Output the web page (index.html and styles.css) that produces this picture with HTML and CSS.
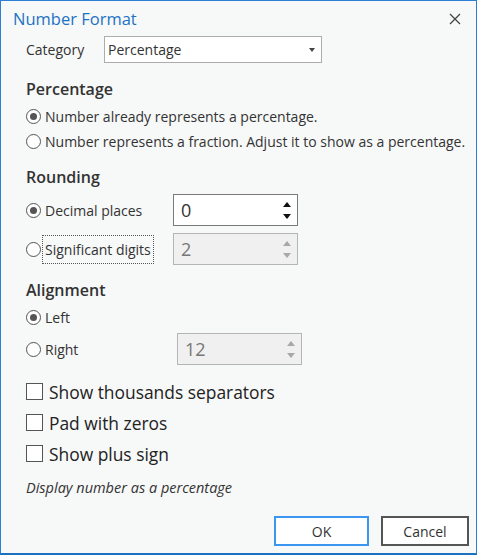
FILE: index.html
```html
<!DOCTYPE html>
<html lang="en">
<head>
  <meta charset="UTF-8">
  <title>Number Format</title>
  <link rel="stylesheet" href="styles.css">
</head>
<body>
  <div class="dialog">
    <header class="titlebar">
      <h1>Number Format</h1>
      <button class="close" aria-label="Close">
        <svg width="12" height="12" viewBox="0 0 12 12"><path d="M1 1 L11 11 M11 1 L1 11" stroke="#444" stroke-width="1.3" fill="none"/></svg>
      </button>
    </header>

    <main class="content">
      <div class="category-row">
        <label>Category</label>
        <div class="select">
          <span>Percentage</span>
          <span class="select-arrow"></span>
        </div>
      </div>

      <section class="group">
        <h2>Percentage</h2>
        <div class="radio-row pct-first"><span class="radio checked"></span>Number already represents a percentage.</div>
        <div class="radio-row"><span class="radio"></span>Number represents a fraction. Adjust it to show as a percentage.</div>
      </section>

      <section class="group">
        <h2 class="rounding-title">Rounding</h2>
        <div class="spin-row first">
          <div class="radio-row"><span class="radio checked"></span>Decimal places</div>
          <div class="spinner">
            <span>0</span>
            <span class="arrows"><span class="up"></span><span class="down"></span></span>
          </div>
        </div>
        <div class="spin-row second">
          <div class="radio-row"><span class="radio"></span><span class="focus">Significant digits</span></div>
          <div class="spinner disabled">
            <span>2</span>
            <span class="arrows"><span class="up"></span><span class="down"></span></span>
          </div>
        </div>
      </section>

      <section class="group">
        <h2 class="align-title">Alignment</h2>
        <div class="radio-row left-row"><span class="radio checked"></span>Left</div>
        <div class="spin-row right-row">
          <div class="radio-row"><span class="radio"></span>Right</div>
          <div class="spinner disabled wide">
            <span>12</span>
            <span class="arrows"><span class="up"></span><span class="down"></span></span>
          </div>
        </div>
      </section>

      <section class="checks">
        <div class="check-row"><span class="checkbox"></span>Show thousands separators</div>
        <div class="check-row"><span class="checkbox"></span>Pad with zeros</div>
        <div class="check-row"><span class="checkbox"></span>Show plus sign</div>
      </section>

      <p class="hint">Display number as a percentage</p>
    </main>

    <footer class="buttons">
      <button class="btn ok">OK</button>
      <button class="btn cancel">Cancel</button>
    </footer>
  </div>
</body>
</html>
```

FILE: styles.css
```css
html, body {
  margin: 0;
  padding: 0;
  width: 477px;
  height: 555px;
  overflow: hidden;
}

body {
  font-family: "Open Sans", "Noto Sans", sans-serif;
  color: #333;
  background: #f7f8f8;
}

.dialog {
  box-sizing: border-box;
  width: 477px;
  height: 555px;
  border: 1px solid #2b7fd4;
  border-bottom: 2px solid #1d6fc0;
  background: #f7f8f8;
  display: flex;
  flex-direction: column;
}

.titlebar {
  height: 35px;
  display: flex;
  align-items: center;
  justify-content: space-between;
  padding: 0 14px 0 12px;
}

.titlebar h1 {
  margin: 0;
  font-size: 16.5px;
  font-weight: normal;
  color: #1c72c4;
}

.close {
  border: none;
  background: none;
  padding: 0;
  width: 14px;
  height: 14px;
  display: flex;
  align-items: center;
  justify-content: center;
}

.content {
  flex: 1;
  padding: 0 0 0 25px;
}

.category-row {
  display: flex;
  align-items: center;
  height: 27px;
  font-size: 14px;
}

.category-row label {
  width: 78px;
}

.select {
  box-sizing: border-box;
  width: 218px;
  height: 27px;
  border: 1px solid #adadad;
  background: #fff;
  display: flex;
  align-items: center;
  justify-content: space-between;
  padding: 0 6px 0 3px;
}

.select-arrow {
  width: 0;
  height: 0;
  border-left: 3px solid transparent;
  border-right: 3px solid transparent;
  border-top: 4px solid #444;
}

.group h2 {
  margin: 0;
  font-size: 16px;
  font-weight: 600;
  color: #333;
  height: 22px;
  line-height: 22px;
  margin-top: 15px;
}

.group h2.rounding-title {
  margin-top: 12px;
}

.group h2.align-title {
  margin-top: 14px;
}

.radio-row {
  display: flex;
  align-items: center;
  height: 25px;
  font-size: 14px;
  color: #333;
}

.pct-first {
  margin-top: 4px;
}

.radio {
  box-sizing: border-box;
  width: 15px;
  height: 15px;
  border: 1px solid #555;
  border-radius: 50%;
  margin-right: 4px;
  background: #fff;
  display: flex;
  align-items: center;
  justify-content: center;
  flex-shrink: 0;
}

.radio.checked::after {
  content: "";
  width: 7px;
  height: 7px;
  border-radius: 50%;
  background: #555;
}

.spin-row {
  display: flex;
  align-items: center;
  height: 32px;
}

.spin-row .radio-row {
  width: 147px;
}

.spin-row.first {
  margin-top: 6px;
}

.spin-row.second {
  margin-top: 7px;
}

.left-row {
  margin-top: 4px;
}

.right-row {
  margin-top: 3px;
}

.right-row .radio-row {
  width: 151px;
}

.focus {
  outline: 1px dotted #555;
  outline-offset: 0;
  padding: 4px 2px 4px 2px;
  margin-left: -2px;
}

.spinner {
  box-sizing: border-box;
  width: 125px;
  height: 32px;
  border: 1px solid #7a7a7a;
  background: #fff;
  display: flex;
  align-items: center;
  justify-content: space-between;
  padding: 0 6px 0 7px;
  font-size: 18px;
  color: #333;
}

.spinner.disabled {
  background: #f0f0f0;
  border-color: #b5b5b5;
  color: #777;
}

.arrows {
  display: flex;
  flex-direction: column;
  gap: 7px;
}

.arrows .up {
  width: 0;
  height: 0;
  border-left: 4px solid transparent;
  border-right: 4px solid transparent;
  border-bottom: 5px solid #111;
}

.arrows .down {
  width: 0;
  height: 0;
  border-left: 4px solid transparent;
  border-right: 4px solid transparent;
  border-top: 5px solid #111;
}

.disabled .arrows .up {
  border-bottom-color: #a8a8a8;
}

.disabled .arrows .down {
  border-top-color: #a8a8a8;
}

.checks {
  margin-top: 11px;
}

.check-row {
  display: flex;
  align-items: center;
  height: 31px;
  font-size: 17.4px;
  color: #222;
}

.checkbox {
  box-sizing: border-box;
  width: 17px;
  height: 17px;
  border: 1px solid #555;
  background: #fff;
  margin-right: 6px;
}

.hint {
  margin: 9px 0 0 0;
  font-size: 14.5px;
  font-style: italic;
  color: #333;
}

.buttons {
  display: flex;
  justify-content: flex-end;
  gap: 12px;
  padding: 0 7px 7px 0;
}

.btn {
  box-sizing: border-box;
  height: 30px;
  font-family: inherit;
  font-size: 14px;
  color: #333;
  background: #fff;
}

.btn.ok {
  width: 95px;
  border: 2px solid #3a96f0;
}

.btn.cancel {
  width: 88px;
  border: 2px solid #555;
}
```
